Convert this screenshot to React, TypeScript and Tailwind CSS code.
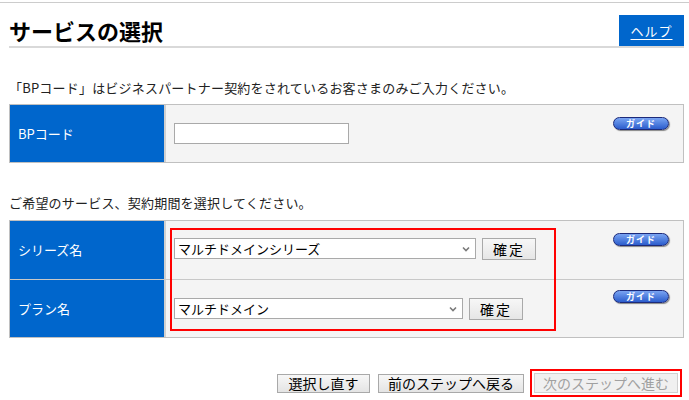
import React from "react"

function GuideButton() {
    return (
        <span className="flex w-[56px] h-[13px] items-center justify-center rounded-full border border-[#1c2a7a]
            bg-linear-to-b from-[#7aa4f2] to-[#2c5ccc] text-white text-[9px] font-bold leading-none tracking-[1px]
            shadow-[1px_1px_1px_rgba(0,0,0,0.45)]">
            ガイド
        </span>
    )
}

function FakeSelect({ value, width }: { value: string, width: string }) {
    return (
        <div className={`${width} h-[21px] flex items-center justify-between border border-[#a9a9a9] bg-white pl-[3px] pr-[5px]`}>
            <span className="text-[13px] leading-none text-black">{value}</span>
            <svg width="8" height="6" viewBox="0 0 8 6" className="text-[#7a7a7a]">
                <path d="M1 1.5 L4 4.5 L7 1.5" fill="none" stroke="currentColor" strokeWidth="1.6" />
            </svg>
        </div>
    )
}

function ConfirmButton() {
    return (
        <button className="w-[54px] h-[22px] flex items-center justify-center border border-[#a9a9a9]
            bg-linear-to-b from-[#f7f7f7] to-[#e6e6e6] text-[14px] leading-none tracking-[2px] text-black">
            確定
        </button>
    )
}

export default function App() {
    return (
        <div className="w-[689px] h-[400px] overflow-hidden bg-white text-[#222] font-['Noto_Sans_CJK_JP',sans-serif]">

            {/* TOP LINE */}
            <div className="mt-[2px] h-px bg-[#cccccc]" />

            <div className="ml-[9px] w-[675px]">

                {/* HEADER */}
                <div className="mt-[12px] flex items-end justify-between border-b-2 border-[#d9d9d9]">
                    <h1 className="text-[22px] font-bold leading-[31px] text-black">サービスの選択</h1>
                    <a className="w-[65px] h-[31px] flex items-center justify-center bg-[#0066cc] text-white text-[13px] tracking-[1px] underline underline-offset-3">
                        ヘルプ
                    </a>
                </div>

                {/* BP CODE */}
                <p className="mt-[30px] text-[13px] leading-[20px] tracking-[0.2px]">
                    「BPコード」はビジネスパートナー契約をされているお客さまのみご入力ください。
                </p>

                <div className="mt-[6px] flex h-[59px] border border-[#c0c0c0]">
                    <div className="w-[156px] flex items-center pl-[8px] bg-[#0066cc] border-r-2 border-[#d0d0d0] text-white text-[13px]">
                        BPコード
                    </div>
                    <div className="flex-1 flex bg-[#f4f4f4] pl-[8px]">
                        <input className="self-center w-[175px] h-[21px] border border-[#a9a9a9] bg-white outline-none" />
                        <div className="ml-auto mr-[14px] mt-[12px]">
                            <GuideButton />
                        </div>
                    </div>
                </div>

                {/* SERVICE */}
                <p className="mt-[30px] text-[13px] leading-[20px] tracking-[0.2px]">
                    ご希望のサービス、契約期間を選択してください。
                </p>

                <div className="relative mt-[7px] border border-[#c0c0c0]">
                    <div className="flex h-[59px] border-b border-[#c8c8c8]">
                        <div className="w-[156px] flex items-center pl-[8px] bg-[#0066cc] border-r-2 border-[#d0d0d0] text-white text-[13px]">
                            シリーズ名
                        </div>
                        <div className="flex-1 flex bg-[#f4f4f4] pl-[8px]">
                            <div className="mt-[17px] flex gap-[6px] self-start">
                                <FakeSelect value="マルチドメインシリーズ" width="w-[302px]" />
                                <ConfirmButton />
                            </div>
                            <div className="ml-auto mr-[14px] mt-[12px] self-start">
                                <GuideButton />
                            </div>
                        </div>
                    </div>
                    <div className="flex h-[57px]">
                        <div className="w-[156px] flex items-center pl-[8px] bg-[#0066cc] border-r-2 border-[#d0d0d0] text-white text-[13px]">
                            プラン名
                        </div>
                        <div className="flex-1 flex bg-[#f4f4f4] pl-[8px]">
                            <div className="mt-[18px] flex gap-[6px] self-start">
                                <FakeSelect value="マルチドメイン" width="w-[289px]" />
                                <ConfirmButton />
                            </div>
                            <div className="ml-auto mr-[14px] mt-[10px] self-start">
                                <GuideButton />
                            </div>
                        </div>
                    </div>

                    {/* HIGHLIGHT */}
                    <div className="absolute left-[160px] top-[7px] w-[386px] h-[103px] border-2 border-[#ff0000] pointer-events-none" />
                </div>

                {/* ACTIONS */}
                <div className="mt-[31px] mr-[2px] flex items-center justify-end">
                    <button className="w-[93px] h-[19px] flex items-center justify-center border border-[#a9a9a9]
                        bg-linear-to-b from-[#f7f7f7] to-[#e4e4e4] text-[14px] leading-none text-black">
                        選択し直す
                    </button>
                    <button className="ml-[8px] w-[146px] h-[19px] flex items-center justify-center border border-[#a9a9a9]
                        bg-linear-to-b from-[#f7f7f7] to-[#e4e4e4] text-[14px] leading-none text-black">
                        前のステップへ戻る
                    </button>
                    <div className="ml-[6px] border-2 border-[#ff0000] p-[2px]">
                        <button disabled className="w-[144px] h-[20px] flex items-center justify-center border border-[#d0d0d0]
                            bg-[#f0f0f0] text-[14px] leading-none text-[#a0a0a0]">
                            次のステップへ進む
                        </button>
                    </div>
                </div>

            </div>
        </div>
    )
}
